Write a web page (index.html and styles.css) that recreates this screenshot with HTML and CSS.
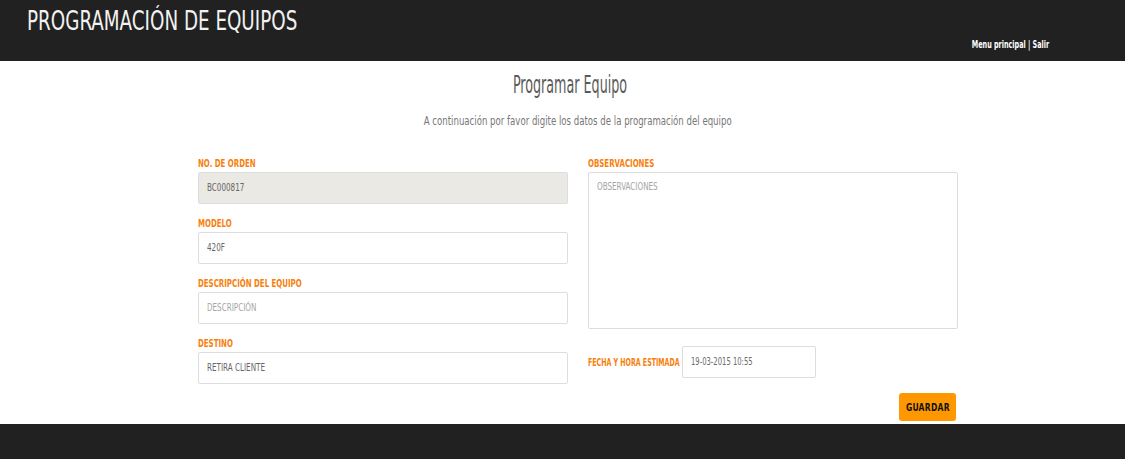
FILE: index.html
```html
<!DOCTYPE html>
<html lang="es">
<head>
<meta charset="utf-8">
<title>Programación de equipos</title>
<link rel="stylesheet" href="styles.css">
</head>
<body>
<header class="topbar">
  <h1 class="brand"><span class="cond">PROGRAMACIÓN DE EQUIPOS</span></h1>
  <nav class="nav"><span class="cond"><a href="#">Menu principal</a> | <a href="#">Salir</a></span></nav>
</header>
<main class="content">
  <div class="container">
    <h2 class="page-title"><span class="cond">Programar Equipo</span></h2>
    <p class="lead"><span class="cond">A continuación por favor digite los datos de la programación del equipo</span></p>
    <form class="form">
      <div class="col">
        <div class="field">
          <label class="label"><span class="cond">NO. DE ORDEN</span></label>
          <div class="input readonly"><span class="cond">BC000817</span></div>
        </div>
        <div class="field">
          <label class="label"><span class="cond">MODELO</span></label>
          <div class="input"><span class="cond">420F</span></div>
        </div>
        <div class="field">
          <label class="label"><span class="cond">DESCRIPCIÓN DEL EQUIPO</span></label>
          <div class="input placeholder"><span class="cond">DESCRIPCIÓN</span></div>
        </div>
        <div class="field">
          <label class="label"><span class="cond">DESTINO</span></label>
          <div class="input"><span class="cond">RETIRA CLIENTE</span></div>
        </div>
      </div>
      <div class="col">
        <div class="field">
          <label class="label"><span class="cond">OBSERVACIONES</span></label>
          <div class="input textarea placeholder"><span class="cond">OBSERVACIONES</span></div>
        </div>
        <div class="inline-field">
          <label class="label date-label"><span class="cond">FECHA Y HORA ESTIMADA</span></label>
          <div class="input date"><span class="cond">19-03-2015 10:55</span></div>
        </div>
        <div class="actions">
          <button type="button" class="btn"><span class="cond">GUARDAR</span></button>
        </div>
      </div>
    </form>
  </div>
</main>
<footer class="footer"></footer>
</body>
</html>
```
FILE: styles.css
```css
html, body {
  margin: 0;
  padding: 0;
  background: #ffffff;
}
body {
  font-family: "DejaVu Sans Condensed", "Liberation Sans Narrow", sans-serif;
  width: 1125px;
  height: 459px;
  overflow: hidden;
}
.cond {
  display: inline-block;
  white-space: nowrap;
  transform-origin: left center;
  transform: scaleX(0.8);
}
.topbar {
  background: #212121;
  height: 61px;
  box-sizing: border-box;
  padding: 0 76px 0 27px;
  display: flex;
  justify-content: space-between;
}
.brand {
  margin: 0;
  padding-top: 6px;
  font-size: 27px;
  line-height: 30px;
  font-weight: normal;
  color: #f2f2f2;
}
.brand .cond {
  transform: scaleX(0.754);
}
.nav {
  align-self: flex-end;
  padding-bottom: 10px;
  font-size: 10px;
  line-height: 12px;
  font-weight: bold;
  color: #ffffff;
}
.nav .cond {
  transform-origin: right center;
  transform: scaleX(0.715);
}
.nav a {
  color: #ffffff;
  text-decoration: none;
}
.content {
  height: 363px;
  box-sizing: border-box;
  padding-top: 9px;
}
.container {
  width: 760px;
  margin-left: 198px;
}
.page-title {
  margin: 0;
  text-align: center;
  font-size: 25px;
  line-height: 30px;
  font-weight: normal;
  color: #5a5a5a;
}
.page-title .cond {
  transform-origin: center center;
  transform: scaleX(0.565);
  margin-left: -16px;
}
.lead {
  margin: 13px 0 0;
  text-align: center;
  font-size: 12px;
  line-height: 16px;
  font-weight: normal;
  color: #777777;
}
.lead .cond {
  transform-origin: center center;
  transform: scaleX(0.795);
}
.form {
  display: grid;
  grid-template-columns: 370px 370px;
  column-gap: 20px;
  margin-top: 26px;
}
.field {
  display: flex;
  flex-direction: column;
  margin-bottom: 11px;
}
.label {
  display: block;
  font-size: 10px;
  line-height: 17px;
  font-weight: bold;
  color: #f7800c;
}
.label .cond {
  transform: scaleX(0.78);
}
.input {
  height: 32px;
  box-sizing: border-box;
  border: 1px solid #dddddd;
  border-radius: 2px;
  padding: 0 8px;
  font-size: 10px;
  line-height: 30px;
  color: #666666;
  background: #ffffff;
}
.input.readonly {
  background: #eae9e3;
}
.input.placeholder {
  color: #a4a4a4;
}
.input.textarea {
  height: 157px;
  line-height: 28px;
}
.inline-field {
  display: flex;
  align-items: center;
  margin-top: 17px;
}
.date-label {
  width: 94px;
  flex-shrink: 0;
}
.date-label .cond {
  transform: scaleX(0.7);
}
.input.date {
  width: 134px;
  flex-shrink: 0;
  color: #6b6b6b;
}
.input.date .cond {
  transform: scaleX(0.76);
}
.actions {
  display: flex;
  justify-content: flex-end;
  margin-top: 15px;
  padding-right: 2px;
}
.btn {
  background: #ff9800;
  border: none;
  border-radius: 3px;
  height: 28px;
  width: 57px;
  padding: 0;
  font-family: inherit;
  font-size: 10px;
  font-weight: bold;
  color: #111111;
  letter-spacing: 0.3px;
  text-align: center;
}
.btn .cond {
  transform-origin: center center;
  transform: scaleX(0.85);
}
.footer {
  background: #212121;
  height: 35px;
}
```
